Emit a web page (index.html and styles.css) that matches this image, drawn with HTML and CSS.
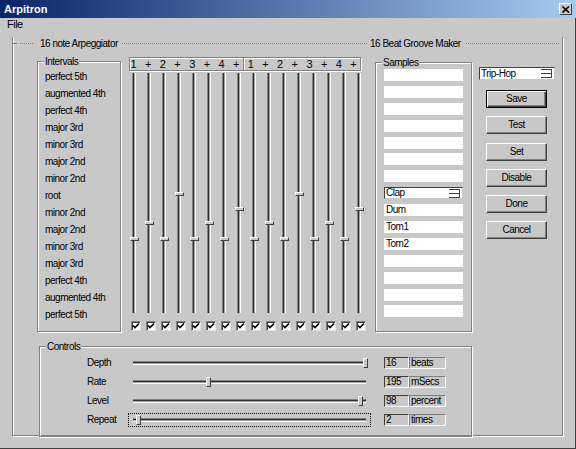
FILE: index.html
```html
<!DOCTYPE html>
<html>
<head>
  <meta charset="UTF-8" />
  <title>Arpitron</title>
  <link rel="stylesheet" href="styles.css">
</head>
<body>

<div class="window">
  <div class="titlebar">
    <span>Arpitron</span>
    <span class="close">
      <svg width="8" height="7" viewBox="0 0 8 7"><path d="M0.5 0.5 L7 6.5 M7 0.5 L0.5 6.5" stroke="#000" stroke-width="1.6" fill="none"/></svg>
    </span>
  </div>
  <div class="menubar"><span>File</span></div>

  <div class="client">
    <div class="frame">
      <div class="frame-head">
        <div class="head-first">
          <i class="dots lead"></i><span>16 note Arpeggiator</span><i class="dots"></i>
        </div>
        <div class="head-second">
          <span>16 Beat Groove Maker</span><i class="dots"></i>
        </div>
      </div>

      <div class="main">
        <div class="group intervals">
          <span class="cap">Intervals</span>
          <div class="row">perfect 5th</div>
          <div class="row">augmented 4th</div>
          <div class="row">perfect 4th</div>
          <div class="row">major 3rd</div>
          <div class="row">minor 3rd</div>
          <div class="row">major 2nd</div>
          <div class="row">minor 2nd</div>
          <div class="row">root</div>
          <div class="row">minor 2nd</div>
          <div class="row">major 2nd</div>
          <div class="row">minor 3rd</div>
          <div class="row">major 3rd</div>
          <div class="row">perfect 4th</div>
          <div class="row">augmented 4th</div>
          <div class="row">perfect 5th</div>
        </div>

        <div class="beats">
          <div class="measure">
            <span>1</span><span>+</span><span>2</span><span>+</span><span>3</span><span>+</span><span>4</span><span>+</span>
            <span class="bar">1</span><span>+</span><span>2</span><span>+</span><span>3</span><span>+</span><span>4</span><span>+</span>
          </div>
          <div class="tracks" id="tracks"></div>
        </div>

        <div class="group samples">
          <span class="cap">Samples</span>
          <div class="fields">
            <div class="field"></div>
            <div class="field"></div>
            <div class="field"></div>
            <div class="field"></div>
            <div class="field"></div>
            <div class="field"></div>
            <div class="field"></div>
            <div class="field combo"><span>Clap</span>
              <svg class="spin" width="11" height="9" viewBox="0 0 11 9"><path d="M0 0.5H11M0 4.5H11M0 8.5H11M10.5 0V9" stroke="#404040" fill="none"/><path d="M0 1.5H10M0 5.5H10" stroke="#fff" fill="none"/></svg>
            </div>
            <div class="field">Dum</div>
            <div class="field">Tom1</div>
            <div class="field">Tom2</div>
            <div class="field"></div>
            <div class="field"></div>
            <div class="field"></div>
            <div class="field"></div>
          </div>
        </div>

        <div class="side">
          <div class="select"><span>Trip-Hop</span>
            <svg class="spin" width="11" height="9" viewBox="0 0 11 9"><path d="M0 0.5H11M0 4.5H11M0 8.5H11M10.5 0V9" stroke="#404040" fill="none"/><path d="M0 1.5H10M0 5.5H10" stroke="#fff" fill="none"/></svg>
          </div>
          <div class="buttons">
            <div class="btn default">Save</div>
            <div class="btn">Test</div>
            <div class="btn">Set</div>
            <div class="btn">Disable</div>
            <div class="btn">Done</div>
            <div class="btn">Cancel</div>
          </div>
        </div>
      </div>

      <div class="group controls">
        <span class="cap">Controls</span>
        <div class="ctl">
          <span class="label">Depth</span>
          <div class="slider"><div class="hgroove"><div class="hthumb" style="margin-left:230px"></div></div></div>
          <div class="value"><span class="num">16</span><span class="unit">beats</span></div>
        </div>
        <div class="ctl">
          <span class="label">Rate</span>
          <div class="slider"><div class="hgroove"><div class="hthumb" style="margin-left:73px"></div></div></div>
          <div class="value"><span class="num">195</span><span class="unit">mSecs</span></div>
        </div>
        <div class="ctl">
          <span class="label">Level</span>
          <div class="slider"><div class="hgroove"><div class="hthumb" style="margin-left:225px"></div></div></div>
          <div class="value"><span class="num">98</span><span class="unit">percent</span></div>
        </div>
        <div class="ctl">
          <span class="label">Repeat</span>
          <div class="slider focus"><div class="hgroove"><div class="hthumb" style="margin-left:3px"></div></div></div>
          <div class="value"><span class="num">2</span><span class="unit">times</span></div>
        </div>
      </div>
    </div>
  </div>
</div>

<script>
  // posicio de cada nota (px des de dalt del carril)
  var notes = [164, 148, 164, 119, 164, 148, 164, 134, 164, 148, 164, 119, 164, 148, 164, 134];
  var tick = '<svg width="8" height="8" viewBox="0 0 8 8"><path d="M1 3.5 L3 5.5 L7 1.5" stroke="#000" stroke-width="1.7" fill="none"/></svg>';
  var html = "";
  for (var i = 0; i < notes.length; i++) {
    html += '<div class="col"><div class="groove"><div class="thumb" style="margin-top:' + notes[i] + 'px"></div></div>' +
            '<span class="check">' + tick + '</span></div>';
  }
  document.getElementById("tracks").innerHTML = html;
</script>

</body>
</html>
```

FILE: styles.css
```css
* {
  box-sizing: border-box;
}
body {
  margin: 0;
  font-family: "Liberation Sans", Arial, sans-serif;
  font-size: 10px;
  letter-spacing: -0.5px;
  color: #000;
  background-color: #c8c8c8;
}
.window {
  width: 576px;
  height: 449px;
  background-color: #c8c8c8;
  box-shadow: inset -1px -1px #404040;
}
.titlebar {
  height: 18px;
  display: flex;
  align-items: center;
  justify-content: space-between;
  padding: 0 4px;
  background: linear-gradient(90deg, #0a246a, #a6caf0);
  color: #fff;
  font-size: 11px;
  font-weight: bold;
  letter-spacing: 0;
}
.close {
  width: 13px;
  height: 12px;
  display: flex;
  align-items: center;
  justify-content: center;
  background-color: #c8c8c8;
  border: 1px solid;
  border-color: #fff #404040 #404040 #fff;
}
.menubar {
  height: 13px;
  line-height: 13px;
  padding-left: 7px;
  font-size: 11px;
}
.client {
  padding: 12px 13px 0 12px;
}

/* marc exterior */
.frame {
  height: 399px;
  border: 1px solid #808080;
  border-top: 0;
  box-shadow: inset 1px 0 #fff, 1px 1px #fff;
}
.frame-head {
  display: flex;
  align-items: center;
  height: 13px;
  margin-top: -6px;
  line-height: 13px;
  background: linear-gradient(#808080, #808080) no-repeat 0 6px / 4px 1px;
}
.dots {
  height: 1px;
  background: repeating-linear-gradient(90deg, #808080 0 1px, transparent 1px 2px);
}
.head-first {
  display: flex;
  align-items: center;
  width: 357px;
}
.head-first .dots {
  flex: 1;
  margin: 0 2px 0 4px;
}
.head-first .dots.lead {
  flex: 0 0 14px;
  margin: 0 6px 0 7px;
}
.head-second {
  flex: 1;
  display: flex;
  align-items: center;
}
.head-second .dots {
  flex: 1;
  margin: 0 3px 0 5px;
}

/* caixes de grup */
.group {
  border: 1px solid #808080;
  box-shadow: inset 1px 1px #fff, 1px 1px #fff;
}
.cap {
  display: block;
  width: max-content;
  margin: -7px 0 0 6px;
  padding: 0 1px;
  line-height: 13px;
  background-color: #c8c8c8;
}
.main {
  display: flex;
  align-items: flex-start;
  padding-left: 24px;
}
.intervals {
  width: 84px;
  height: 271px;
  margin-top: 11px;
}
.intervals .row {
  padding-left: 7px;
  line-height: 17px;
  white-space: nowrap;
}

/* graella de 16 passos */
.beats {
  width: 235px;
  margin: 7px 0 0 5px;
}
.measure {
  display: flex;
  width: 232px;
  height: 14px;
  margin-left: 3px;
  border: 1px solid #808080;
  box-shadow: inset 1px 1px #fff, 1px 1px #fff;
}
.measure span {
  flex: 0 0 14.67px;
  text-align: center;
  line-height: 12px;
  font-size: 11px;
}
.measure span:first-child {
  margin-left: -4px;
}
.measure .bar {
  box-shadow: inset 1px 0 #808080, inset 2px 0 #fff;
}
.tracks {
  display: flex;
  margin-top: 2px;
}
.col {
  flex: 0 0 14.67px;
  display: flex;
  flex-direction: column;
}
.groove {
  width: 4px;
  height: 240px;
  margin-left: 6px;
  background: linear-gradient(90deg, #808080 0 1px, #303030 1px 2px, #a0a0a0 2px 3px, #fff 3px 4px);
}
.thumb {
  width: 9px;
  height: 4px;
  margin-left: -2px;
  background-color: #c8c8c8;
  border: 1px solid;
  border-color: #fff #404040 #404040 #fff;
}
.check {
  display: flex;
  align-items: center;
  justify-content: center;
  width: 10px;
  height: 10px;
  margin: 8px 0 0 5px;
  background-color: #fff;
  border: 1px solid;
  border-color: #808080 #e0e0e0 #e0e0e0 #808080;
  box-shadow: inset 1px 1px #404040;
}

/* mostres */
.samples {
  width: 97px;
  height: 270px;
  margin: 12px 0 0 14px;
}
.fields {
  display: flex;
  flex-direction: column;
  gap: 4.9px;
}
.field {
  width: 79px;
  height: 12px;
  margin-left: 8px;
  padding-left: 2px;
  line-height: 12px;
  background-color: #fff;
}
.field.combo,
.select {
  display: flex;
  align-items: center;
  justify-content: space-between;
  padding: 0 2px 0 1px;
  border: 1px solid;
  border-color: #404040 #c8c8c8 #c8c8c8 #404040;
  background-color: #fff;
}
.spin {
  flex: 0 0 11px;
}

/* columna de botons */
.side {
  width: 76px;
  margin: 17px 0 0 7px;
}
.select {
  height: 13px;
  line-height: 11px;
}
.buttons {
  display: flex;
  flex-direction: column;
  gap: 8.3px;
  margin: 10px 0 0 7px;
}
.btn {
  width: 61px;
  height: 18px;
  line-height: 16px;
  text-align: center;
  border: 1px solid;
  border-color: #fff #404040 #404040 #fff;
  box-shadow: inset -1px -1px #808080;
}
.btn.default {
  border-color: #000;
  box-shadow: inset 1px 1px #fff, inset -1px -1px #404040, inset -2px -2px #808080;
}

/* controls */
.controls {
  width: 433px;
  height: 91px;
  margin: 14px 0 0 26px;
}
.ctl {
  display: flex;
  align-items: center;
  height: 19px;
  padding-left: 47px;
}
.label {
  width: 41px;
}
.slider {
  display: flex;
  align-items: center;
  width: 243px;
  height: 14px;
  padding: 0 4px;
  border: 1px dotted transparent;
}
.slider.focus {
  border-color: #000;
}
.hgroove {
  width: 233px;
  height: 4px;
  background: linear-gradient(#808080 0 1px, #303030 1px 2px, #a0a0a0 2px 3px, #fff 3px 4px);
}
.hthumb {
  width: 5px;
  height: 10px;
  margin-top: -3px;
  background-color: #c8c8c8;
  border: 1px solid;
  border-color: #fff #404040 #404040 #fff;
}
.value {
  display: flex;
  margin-left: 13px;
}
.num,
.unit {
  height: 12px;
  line-height: 10px;
  padding-left: 1px;
  border: 1px solid;
}
.num {
  width: 25px;
  border-color: #404040 #fff #fff #404040;
}
.unit {
  width: 37px;
  border-color: #808080 #fff #fff #808080;
}
```
